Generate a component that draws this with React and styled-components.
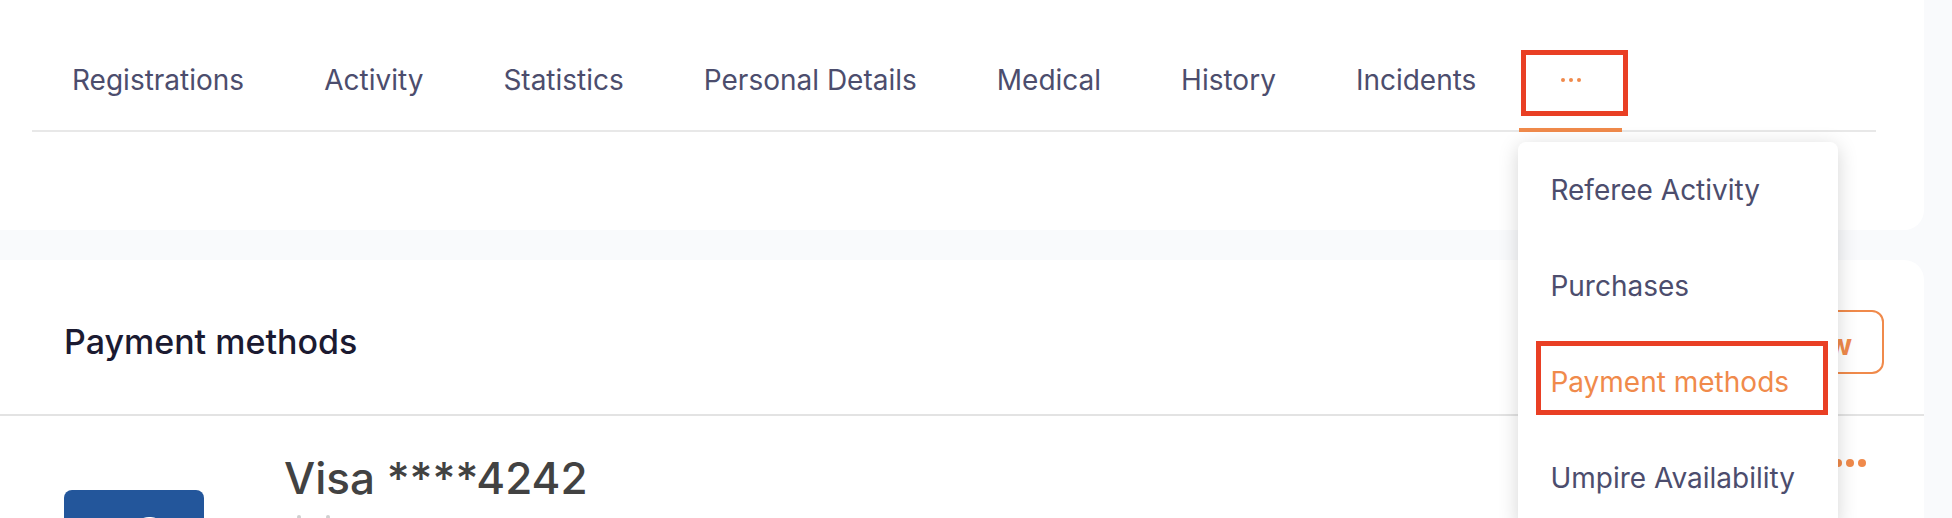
import React from 'react';
import styled, { createGlobalStyle } from 'styled-components';

const Global = createGlobalStyle`
  * { box-sizing: border-box; }
  html, body, #root { height: 100%; }
  body {
    margin: 0;
    overflow: hidden;
    background: #f9fafc;
    font-family: Inter, "Liberation Sans", sans-serif;
    font-size: 28px;
    line-height: 44px;
    color: #4c4d6d;
  }
  button { font: inherit; cursor: pointer; }
  ul, h2, h3 { margin: 0; padding: 0; }
`;

const Page = styled.main`
  height: 100%;
  overflow: hidden;
  display: flex;
  flex-direction: column;
  gap: 30px;
  padding-right: 28px;
`;

const Card = styled.section`
  flex: none;
  background: #fff;
  border-radius: ${(p) => (p.$first ? '0 0 20px 0' : '0 20px 0 0')};
  padding: ${(p) => (p.$first ? '28px 48px 98px 32px' : '0')};
`;

const Tabs = styled.nav`
  display: flex;
  align-items: stretch;
  box-shadow: inset 0 -2px #e8e8e8;
`;

const Tab = styled.a`
  padding: 30px 40px;
  color: inherit;
  text-decoration: none;
  white-space: nowrap;
`;

const More = styled.div`
  position: relative;
  display: flex;
  margin-left: 3px;
`;

const MoreButton = styled.button`
  width: 103px;
  display: flex;
  align-items: center;
  justify-content: center;
  padding: 4px 0 0;
  border: 0;
  border-bottom: 4px solid #f08a4b;
  background: none;
  color: #f08a4b;
`;

const Highlight = styled.span`
  position: absolute;
  inset: ${(p) => p.$inset};
  border: 5px solid #e93f24;
  pointer-events: none;
`;

const Menu = styled.ul`
  position: absolute;
  z-index: 2;
  top: calc(100% + 10px);
  left: -1px;
  width: 320px;
  list-style: none;
  background: #fff;
  border-radius: 8px;
  box-shadow: 0 4px 20px rgba(0, 0, 0, 0.17);
`;

const MenuItem = styled.li`
  position: relative;
`;

const MenuLink = styled.a`
  display: block;
  padding: 26px 32px;
  white-space: nowrap;
  color: ${(p) => (p.$active ? '#f08a4b' : 'inherit')};
  text-decoration: none;
`;

const Header = styled.header`
  display: flex;
  align-items: center;
  justify-content: space-between;
  padding: 50px 40px 40px 64px;
  border-bottom: 2px solid #e3e3e3;
`;

const Title = styled.h2`
  font-size: 34px;
  font-weight: 500;
  color: #1b1a31;
`;

const AddButton = styled.button`
  height: 64px;
  padding: 6px 30px 0;
  border: 2px solid #f08a4b;
  border-radius: 12px;
  background: #fff;
  color: #f08a4b;
  font-weight: 700;
`;

const Method = styled.article`
  display: flex;
  align-items: flex-start;
  gap: 80px;
  padding: 34px 58px 40px 64px;
`;

const Brand = styled.svg`
  flex: none;
  margin-top: 40px;
`;

const MethodText = styled.div`
  flex: 1;
`;

const CardName = styled.h3`
  font-size: 44px;
  line-height: 56px;
  font-weight: 500;
  color: #424242;
`;

const Detail = styled.svg`
  display: block;
  margin-top: 9px;
  color: #d0d0d0;
`;

const MethodMenu = styled.button`
  display: flex;
  padding: 9px 0;
  border: 0;
  background: none;
  color: #f08a4b;
`;

const Dots = ({ r, step }) => (
  <svg width={step * 2 + r * 2} height={r * 2} fill="currentColor" aria-hidden="true">
    {[0, 1, 2].map((i) => (
      <circle key={i} cx={r + i * step} cy={r} r={r} />
    ))}
  </svg>
);

const tabs = ['Registrations', 'Activity', 'Statistics', 'Personal Details', 'Medical', 'History', 'Incidents'];
const menu = ['Referee Activity', 'Purchases', 'Payment methods', 'Umpire Availability'];
const current = 'Payment methods';

export default function App() {
  return (
    <>
      <Global />
      <Page>
        <Card $first>
          <Tabs>
            {tabs.map((t) => (
              <Tab key={t} href="#">{t}</Tab>
            ))}
            <More>
              <MoreButton type="button" aria-label="More">
                <Dots r={2} step={8} />
              </MoreButton>
              <Highlight $inset="22px -6px 16px 2px" />
              <Menu>
                {menu.map((m) => (
                  <MenuItem key={m}>
                    <MenuLink href="#" $active={m === current}>{m}</MenuLink>
                    {m === current && <Highlight $inset="7px 10px 15px 18px" />}
                  </MenuItem>
                ))}
              </Menu>
            </More>
          </Tabs>
        </Card>
        <Card>
          <Header>
            <Title>Payment methods</Title>
            <AddButton type="button">Add new</AddButton>
          </Header>
          <Method>
            <Brand width="140" height="96" viewBox="0 0 140 96" aria-hidden="true">
              <rect width="140" height="96" rx="8" fill="#23569b" />
              <path d="M73 37c0-7 6-10 12-10 4 0 7 1 9 2l-2 7c-4-2-10-2-10 1 0 4 10 5 10 14 0 11-13 13-21 9l2-8c5 3 11 3 11 0 0-4-11-6-11-15z" fill="#fff" />
            </Brand>
            <MethodText>
              <CardName>Visa ****4242</CardName>
              <Detail width="60" height="24" fill="currentColor" aria-hidden="true">
                <circle cx="15" cy="2" r="2" />
                <circle cx="44" cy="2" r="2" />
              </Detail>
            </MethodText>
            <MethodMenu type="button" aria-label="Payment method options">
              <Dots r={4} step={12} />
            </MethodMenu>
          </Method>
        </Card>
      </Page>
    </>
  );
}
